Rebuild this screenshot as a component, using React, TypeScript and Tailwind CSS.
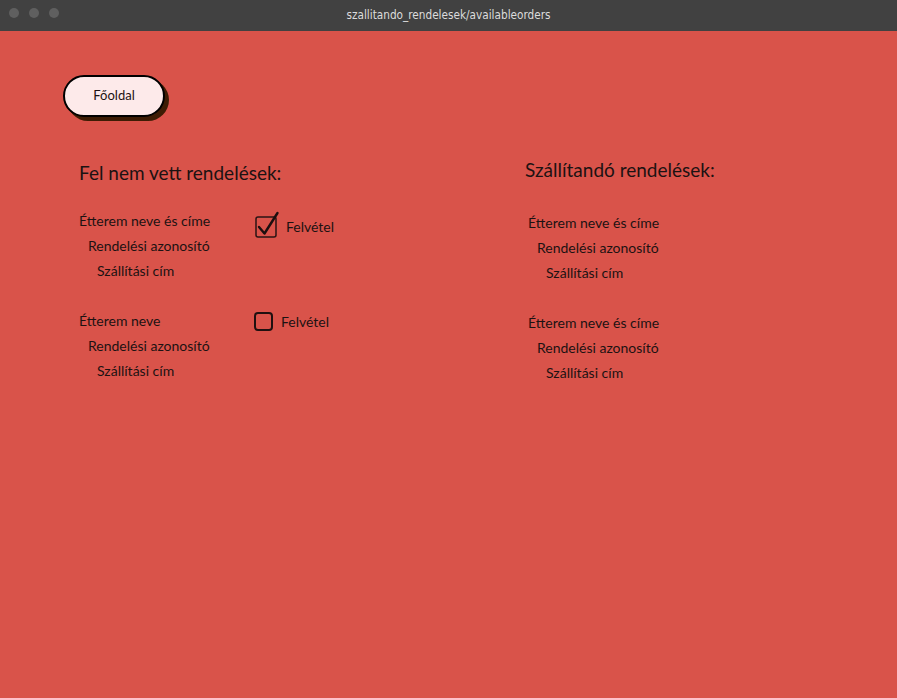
import React from "react";

const font = { fontFamily: '"Source Sans Pro", Lato, "Liberation Sans", sans-serif' };

function OrderLines({ name }: { name: string }) {
  return (
    <div className="flex flex-col text-[14px] leading-[25px] text-[#1c1212]">
      <span>{name}</span>
      <span className="pl-[9px]">Rendelési azonosító</span>
      <span className="pl-[18px]">Szállítási cím</span>
    </div>
  );
}

function CheckedBox() {
  return (
    <svg width="26" height="30" viewBox="0 0 26 30" className="block">
      <rect x="1" y="8" width="20" height="20" rx="2" fill="none" stroke="#2a1414" strokeWidth="1.5" />
      <path d="M4 18 L9.5 24.5 L22.5 4" fill="none" stroke="#1c0f0f" strokeWidth="2.4" strokeLinecap="round" strokeLinejoin="round" />
    </svg>
  );
}

export default function App() {
  return (
    <div className="w-[897px] h-[698px] flex flex-col bg-[#d9534a]" style={font}>
      {/* window title bar */}
      <div className="h-[31px] bg-[#414141] flex items-center relative shrink-0">
        <div className="absolute left-[9px] top-[8px] flex gap-[10px]">
          <span className="w-[10px] h-[10px] rounded-full bg-[#5f5f5f]" />
          <span className="w-[10px] h-[10px] rounded-full bg-[#5f5f5f]" />
          <span className="w-[10px] h-[10px] rounded-full bg-[#5f5f5f]" />
        </div>
        <div className="w-full text-center text-[11.7px] text-[#dcdcdc]" style={{ fontFamily: '"Ubuntu Condensed", "Liberation Sans Narrow", "DejaVu Sans Condensed", sans-serif' }}>
          szallitando_rendelesek/availableorders
        </div>
      </div>

      <div className="pl-[63px] pt-[44px]">
        <button className="w-[102px] h-[42px] rounded-full border-2 border-black bg-[#fdeaea] text-[13px] text-[#1c1212] shadow-[4px_4px_0_#3d1c04]">
          Főoldal
        </button>
      </div>

      <div className="flex pt-[44px]">
        <div className="pl-[79px] w-[525px] shrink-0 -mt-[1px]">
          <h2 className="text-[19px] leading-[26px] text-[#1c1212]">Fel nem vett rendelések:</h2>
          <div className="mt-[22px] flex flex-col gap-[25px]">
            <div className="flex">
              <div className="w-[176px]">
                <OrderLines name="Étterem neve és címe" />
              </div>
              <div className="flex items-start mt-[1px]">
                <CheckedBox />
                <span className="ml-[5px] mt-[8px] text-[14px] leading-[20px] text-[#1c1212]">Felvétel</span>
              </div>
            </div>
            <div className="flex">
              <div className="w-[175px]">
                <OrderLines name="Étterem neve" />
              </div>
              <div className="flex items-start pt-[4px]">
                <span className="w-[19px] h-[19px] rounded-[4px] border-2 border-[#1f1010]" />
                <span className="ml-[8px] text-[14px] leading-[20px] text-[#1c1212]">Felvétel</span>
              </div>
            </div>
          </div>
        </div>
        <div className="-mt-[4px]">
          <h2 className="text-[19px] leading-[26px] text-[#1c1212]">Szállítandó rendelések:</h2>
          <div className="mt-[27px] pl-[3px] flex flex-col gap-[25px]">
            <OrderLines name="Étterem neve és címe" />
            <OrderLines name="Étterem neve és címe" />
          </div>
        </div>
      </div>
    </div>
  );
}
